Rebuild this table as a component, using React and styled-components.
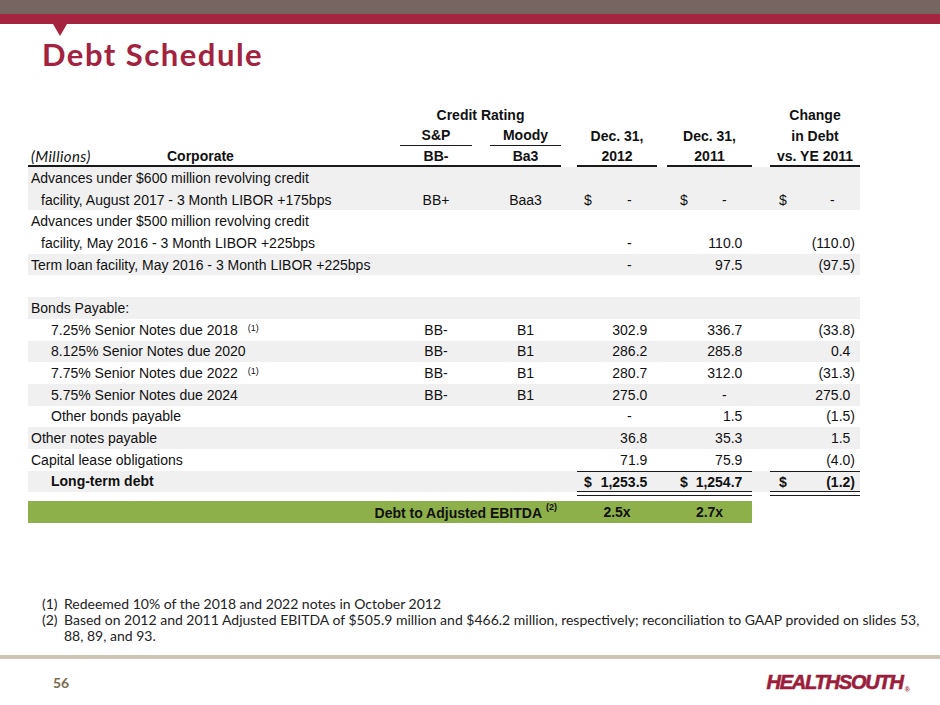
import React from "react";
import styled, { createGlobalStyle } from "styled-components";

const GlobalStyle = createGlobalStyle`
  html, body {
    margin: 0;
    padding: 0;
    background: #ffffff;
  }
  * {
    box-sizing: border-box;
  }
`;

const COLS = "372px 72px 18px 71px 16px 80px 10px 85px 18px 90px";
const CRIMSON = "#a5243f";

const Slide = styled.div`
  width: 940px;
  height: 705px;
  overflow: hidden;
  display: flex;
  flex-direction: column;
  background: #ffffff;
  font-family: "Liberation Sans", Arial, sans-serif;
  color: #111;
`;

const TopBand = styled.div`
  height: 14px;
  background: #766560;
`;

const RedBand = styled.div`
  position: relative;
  height: 10px;
  background: ${CRIMSON};
  &::after {
    content: "";
    position: absolute;
    left: 53px;
    top: 100%;
    border-left: 7px solid transparent;
    border-right: 7px solid transparent;
    border-top: 12px solid ${CRIMSON};
  }
`;

const Title = styled.h1`
  margin: 12px 0 0 42px;
  font-family: Lato, "Open Sans", sans-serif;
  font-weight: 700;
  font-size: 31px;
  line-height: 36px;
  letter-spacing: 1.5px;
  color: #a3223f;
`;

const Table = styled.div`
  margin: 32px 0 0 28px;
  width: 832px;
  display: flex;
  flex-direction: column;
  font-size: 14px;
`;

const Row = styled.div`
  display: grid;
  grid-template-columns: ${COLS};
  grid-template-rows: 100%;
  height: ${p => (p.$head ? "21px" : "21.7px")};
  background: ${p => (p.$shade ? "#f0f0f0" : "transparent")};
  font-weight: ${p => (p.$head ? 700 : 400)};
`;

const Cell = styled.div`
  grid-column: ${p => p.$col};
  grid-row: 1;
  position: relative;
  display: flex;
  align-items: center;
  justify-content: ${p => (p.$center ? "center" : "flex-start")};
  white-space: nowrap;
  border-bottom: ${p =>
    p.$rule ? "2px solid #1a1a1a" : p.$under ? "1px solid #1a1a1a" : "none"};
`;

const LabelCell = styled(Cell)`
  padding-left: ${p => 3 + p.$indent}px;
  font-weight: ${p => (p.$bold ? 700 : 400)};
`;

const Millions = styled.span`
  width: 136px;
  font-family: Lato, "Open Sans", sans-serif;
  font-style: italic;
  font-weight: 400;
  font-size: 15px;
  letter-spacing: 0.4px;
`;

const Note = styled.sup`
  margin-left: ${p => p.$gap}px;
  font-size: 9px;
  position: relative;
  top: -2px;
`;

const NumCell = styled(Cell)`
  padding-left: ${p => p.$dollar}px;
  padding-right: 5px;
  font-weight: ${p => (p.$bold ? 700 : 400)};
  border-top: ${p => (p.$total ? "1px solid #1a1a1a" : "none")};
  &::after {
    content: "";
    display: ${p => (p.$total ? "block" : "none")};
    position: absolute;
    left: 0;
    right: 0;
    bottom: -4px;
    height: 3px;
    border-top: 1px solid #1a1a1a;
    border-bottom: 1px solid #1a1a1a;
  }
`;

const Value = styled.span`
  margin-left: auto;
  padding-right: ${p =>
    p.$kind === "neg" ? "0" : p.$kind === "dash" ? "1.445em" : "0.333em"};
`;

const Gap = styled.div`
  height: 9px;
`;

const EbitdaRow = styled.div`
  display: grid;
  grid-template-columns: 533px 16px 80px 10px 85px;
  width: 724px;
  height: 22px;
  background: #8db04a;
  font-weight: 700;
  align-items: center;
`;

const EbitdaLabel = styled.div`
  text-align: right;
  padding-right: 4px;
  white-space: nowrap;
`;

const EbitdaValue = styled.div`
  grid-column: ${p => p.$col};
  text-align: center;
`;

const Footnotes = styled.div`
  margin: 73px 0 0 42px;
  width: 890px;
  display: flex;
  flex-direction: column;
  font-family: Lato, "Open Sans", sans-serif;
  font-size: 14px;
  line-height: 16px;
  color: #222;
`;

const Footnote = styled.div`
  display: grid;
  grid-template-columns: 22px 1fr;
  white-space: nowrap;
`;

const Rule = styled.div`
  margin-top: 11px;
  height: 4px;
  background: #cdc5b3;
`;

const Footer = styled.div`
  flex: 1;
  display: flex;
  align-items: center;
  justify-content: space-between;
  padding: 0 30px 0 53px;
`;

const PageNum = styled.span`
  font-family: Lato, "Open Sans", sans-serif;
  font-weight: 700;
  font-size: 14px;
  color: #7b6b4f;
`;

const Logo = styled.span`
  font-family: "Liberation Sans", Arial, sans-serif;
  font-weight: 700;
  font-style: italic;
  font-size: 20px;
  letter-spacing: -1.2px;
  color: #9c1c3b;
  -webkit-text-stroke: 0.6px #9c1c3b;
  display: flex;
  align-items: flex-end;
`;

const Reg = styled.span`
  font-size: 7px;
  font-style: normal;
  letter-spacing: 0;
  -webkit-text-stroke: 0;
  margin-left: 2px;
  margin-bottom: 1px;
`;

const NUMCOLS = [
  { key: "d12", col: 6, dollar: 7 },
  { key: "d11", col: 8, dollar: 13 },
  { key: "chg", col: 10, dollar: 9 }
];

const rows = [
  { label: "Advances under $600 million revolving credit", shade: true },
  {
    label: "facility, August 2017 - 3 Month LIBOR +175bps",
    indent: 10,
    sp: "BB+",
    moody: "Baa3",
    d12: "-",
    d11: "-",
    chg: "-",
    dollar: true,
    shade: true
  },
  { label: "Advances under $500 million revolving credit" },
  {
    label: "facility, May 2016 - 3 Month LIBOR +225bps",
    indent: 10,
    d12: "-",
    d11: "110.0",
    chg: "(110.0)"
  },
  {
    label: "Term loan facility, May 2016 - 3 Month LIBOR +225bps",
    d12: "-",
    d11: "97.5",
    chg: "(97.5)",
    shade: true
  },
  { label: "" },
  { label: "Bonds Payable:", shade: true },
  {
    label: "7.25% Senior Notes due 2018",
    note: "(1)",
    indent: 20,
    sp: "BB-",
    moody: "B1",
    d12: "302.9",
    d11: "336.7",
    chg: "(33.8)"
  },
  {
    label: "8.125% Senior Notes due 2020",
    indent: 20,
    sp: "BB-",
    moody: "B1",
    d12: "286.2",
    d11: "285.8",
    chg: "0.4",
    shade: true
  },
  {
    label: "7.75% Senior Notes due 2022",
    note: "(1)",
    indent: 20,
    sp: "BB-",
    moody: "B1",
    d12: "280.7",
    d11: "312.0",
    chg: "(31.3)"
  },
  {
    label: "5.75% Senior Notes due 2024",
    indent: 20,
    sp: "BB-",
    moody: "B1",
    d12: "275.0",
    d11: "-",
    chg: "275.0",
    shade: true
  },
  { label: "Other bonds payable", indent: 20, d12: "-", d11: "1.5", chg: "(1.5)" },
  { label: "Other notes payable", d12: "36.8", d11: "35.3", chg: "1.5", shade: true },
  { label: "Capital lease obligations", d12: "71.9", d11: "75.9", chg: "(4.0)" },
  {
    label: "Long-term debt",
    indent: 20,
    bold: true,
    total: true,
    dollar: true,
    d12: "1,253.5",
    d11: "1,254.7",
    chg: "(1.2)",
    shade: true
  }
];

const kindOf = v => (v === "-" ? "dash" : v.startsWith("(") ? "neg" : "pos");

const DataRow = ({ row }) => (
  <Row $shade={row.shade}>
    <LabelCell $col={1} $indent={row.indent || 0} $bold={row.bold}>
      {row.label}
      {row.note && <Note $gap={10}>{row.note}</Note>}
    </LabelCell>
    {row.sp && (
      <Cell $col={2} $center>
        {row.sp}
      </Cell>
    )}
    {row.moody && (
      <Cell $col={4} $center>
        {row.moody}
      </Cell>
    )}
    {row.total && <NumCell $col={7} $total />}
    {NUMCOLS.map(c =>
      row[c.key] ? (
        <NumCell
          key={c.key}
          $col={c.col}
          $dollar={c.dollar}
          $bold={row.bold}
          $total={row.total}
        >
          {row.dollar && <span>$</span>}
          <Value $kind={kindOf(row[c.key])}>{row[c.key]}</Value>
        </NumCell>
      ) : null
    )}
  </Row>
);

export default function App() {
  return (
    <>
      <GlobalStyle />
      <Slide>
        <TopBand />
        <RedBand />
        <Title>Debt Schedule</Title>

        <Table>
          <Row $head>
            <Cell $col="2 / 5" $center>
              Credit Rating
            </Cell>
            <Cell $col={10} $center>
              Change
            </Cell>
          </Row>
          <Row $head>
            <Cell $col={2} $center $under>
              S&amp;P
            </Cell>
            <Cell $col={4} $center $under>
              Moody
            </Cell>
            <Cell $col={6} $center>
              Dec. 31,
            </Cell>
            <Cell $col={8} $center>
              Dec. 31,
            </Cell>
            <Cell $col={10} $center>
              in Debt
            </Cell>
          </Row>
          <Row $head>
            <LabelCell $col={1} $indent={0} $rule $bold>
              <Millions>(Millions)</Millions>
              Corporate
            </LabelCell>
            <Cell $col={2} $center $rule>
              BB-
            </Cell>
            <Cell $col={3} $rule />
            <Cell $col={4} $center $rule>
              Ba3
            </Cell>
            <Cell $col={6} $center $rule>
              2012
            </Cell>
            <Cell $col={8} $center $rule>
              2011
            </Cell>
            <Cell $col={10} $center $rule>
              vs. YE 2011
            </Cell>
          </Row>

          {rows.map((row, i) => (
            <DataRow key={i} row={row} />
          ))}

          <Gap />
          <EbitdaRow>
            <EbitdaLabel>
              Debt to Adjusted EBITDA<Note $gap={4}>(2)</Note>
            </EbitdaLabel>
            <EbitdaValue $col={3}>2.5x</EbitdaValue>
            <EbitdaValue $col={5}>2.7x</EbitdaValue>
          </EbitdaRow>
        </Table>

        <Footnotes>
          <Footnote>
            <span>(1)</span>
            <span>Redeemed 10% of the 2018 and 2022 notes in October 2012</span>
          </Footnote>
          <Footnote>
            <span>(2)</span>
            <span>
              Based on 2012 and 2011 Adjusted EBITDA of $505.9 million and $466.2
              million, respectively; reconciliation to GAAP provided on slides 53,
              <br />
              88, 89, and 93.
            </span>
          </Footnote>
        </Footnotes>

        <Rule />
        <Footer>
          <PageNum>56</PageNum>
          <Logo>
            HEALTHSOUTH
            <Reg>®</Reg>
          </Logo>
        </Footer>
      </Slide>
    </>
  );
}
